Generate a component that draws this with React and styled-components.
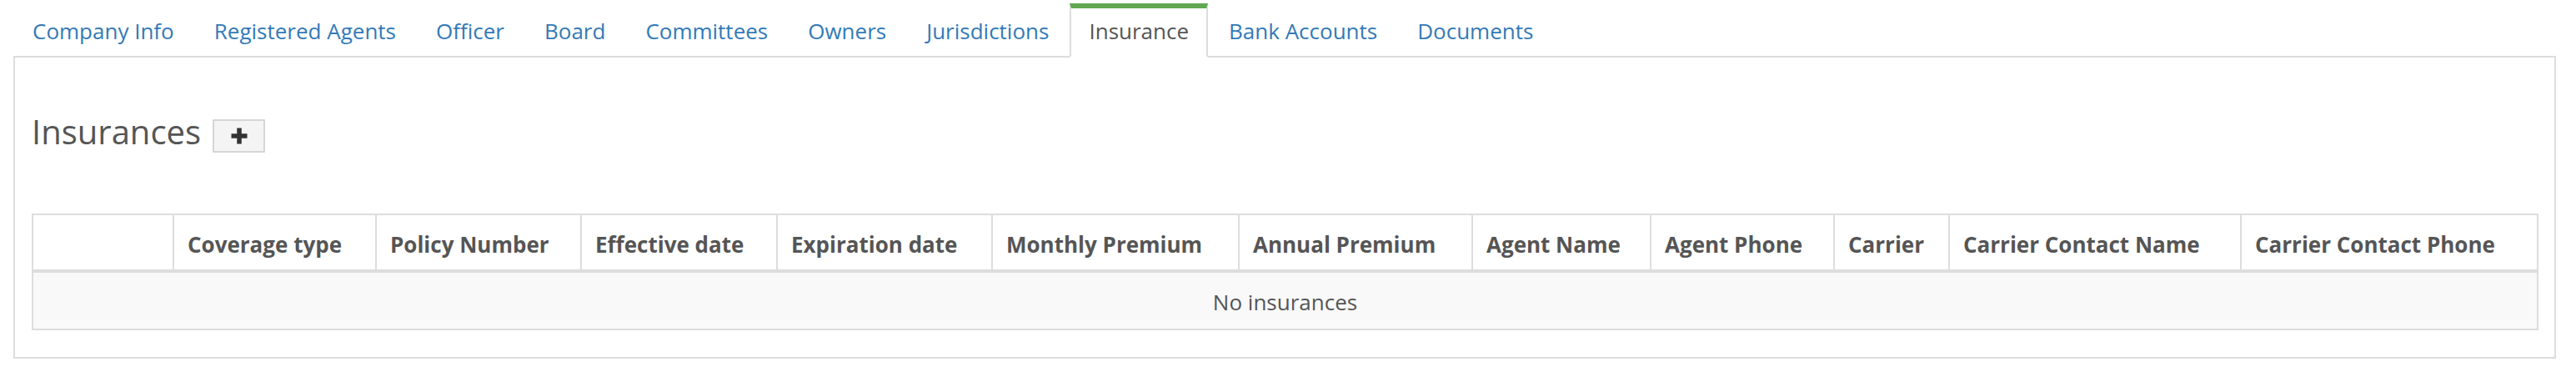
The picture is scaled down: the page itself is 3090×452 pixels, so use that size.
import React from "react";
import styled, { createGlobalStyle } from "styled-components";

const GlobalStyle = createGlobalStyle`
  html, body {
    margin: 0;
    padding: 0;
    background: #fff;
  }
  body {
    font-family: "Open Sans", "DejaVu Sans", sans-serif;
    font-size: 26px;
    line-height: 40px;
    color: #555;
  }
`;

const tabs = [
  "Company Info",
  "Registered Agents",
  "Officer",
  "Board",
  "Committees",
  "Owners",
  "Jurisdictions",
  "Insurance",
  "Bank Accounts",
  "Documents",
];

const columns = [
  { label: "", width: 169 },
  { label: "Coverage type", width: 243 },
  { label: "Policy Number", width: 246 },
  { label: "Effective date", width: 235 },
  { label: "Expiration date", width: 258 },
  { label: "Monthly Premium", width: 296 },
  { label: "Annual Premium", width: 280 },
  { label: "Agent Name", width: 214 },
  { label: "Agent Phone", width: 220 },
  { label: "Carrier", width: 138 },
  { label: "Carrier Contact Name", width: 350 },
  { label: "Carrier Contact Phone", width: 356 },
];

const Page = styled.div`
  padding: 4px 24px 0 16px;
`;

const TabBar = styled.ul`
  display: flex;
  list-style: none;
  margin: 0;
  padding: 0;
  border-bottom: 2px solid #ddd;
`;

const Tab = styled.li`
  margin-right: 2px;
  margin-bottom: -2px;
  padding: 7px 21px 10px;
  border: 2px solid transparent;
  border-top: 6px solid transparent;
  color: #337ab7;
  cursor: pointer;
  white-space: nowrap;

  ${(p) =>
    p.$active &&
    `
    color: #555;
    background: #fff;
    border-color: #ddd;
    border-top-color: #60a750;
    border-bottom-color: #fff;
    cursor: default;
  `}
`;

const Panel = styled.section`
  border: 2px solid #ddd;
  border-top: none;
  padding: 66px 20px 32px;
`;

const HeadingRow = styled.div`
  display: flex;
  align-items: flex-start;
  gap: 14px;
`;

const Title = styled.h3`
  margin: 0;
  font-size: 40px;
  font-weight: 400;
  line-height: 46px;
  color: #555;
`;

const AddButton = styled.button`
  display: flex;
  align-items: center;
  justify-content: center;
  width: 63px;
  height: 40px;
  margin-top: 8px;
  padding: 0;
  background: #f4f4f4;
  border: 2px solid #d6d6d6;
  border-radius: 1px;
  color: #333;
  cursor: pointer;
`;

const Table = styled.table`
  width: 100%;
  margin-top: 73px;
  table-layout: fixed;
  border-collapse: collapse;
  border: 2px solid #ddd;
  line-height: 36px;
`;

const HeadCell = styled.th`
  box-sizing: border-box;
  width: ${(p) => p.$w}px;
  padding: 17px 16px 12px;
  border: 2px solid #ddd;
  border-bottom-width: 4px;
  text-align: left;
  vertical-align: bottom;
  font-weight: 700;
  color: #555;
  white-space: nowrap;
`;

const EmptyRow = styled.tr`
  background: #f9f9f9;
`;

const EmptyCell = styled.td`
  padding: 17px 16px 14px;
  border: 2px solid #ddd;
  text-align: center;
  color: #555;
`;

const PlusIcon = () => (
  <svg width="20" height="20" viewBox="0 0 20 20" aria-hidden="true">
    <rect x="7.25" y="0.5" width="5.5" height="19" fill="currentColor" />
    <rect x="0.5" y="7.25" width="19" height="5.5" fill="currentColor" />
  </svg>
);

export default function App() {
  return (
    <>
      <GlobalStyle />
      <Page>
        <TabBar>
          {tabs.map((t) => (
            <Tab key={t} $active={t === "Insurance"}>
              {t}
            </Tab>
          ))}
        </TabBar>
        <Panel>
          <HeadingRow>
            <Title>Insurances</Title>
            <AddButton aria-label="Add insurance">
              <PlusIcon />
            </AddButton>
          </HeadingRow>
          <Table>
            <thead>
              <tr>
                {columns.map((c, i) => (
                  <HeadCell key={i} $w={c.width}>
                    {c.label}
                  </HeadCell>
                ))}
              </tr>
            </thead>
            <tbody>
              <EmptyRow>
                <EmptyCell colSpan={columns.length}>No insurances</EmptyCell>
              </EmptyRow>
            </tbody>
          </Table>
        </Panel>
      </Page>
    </>
  );
}
